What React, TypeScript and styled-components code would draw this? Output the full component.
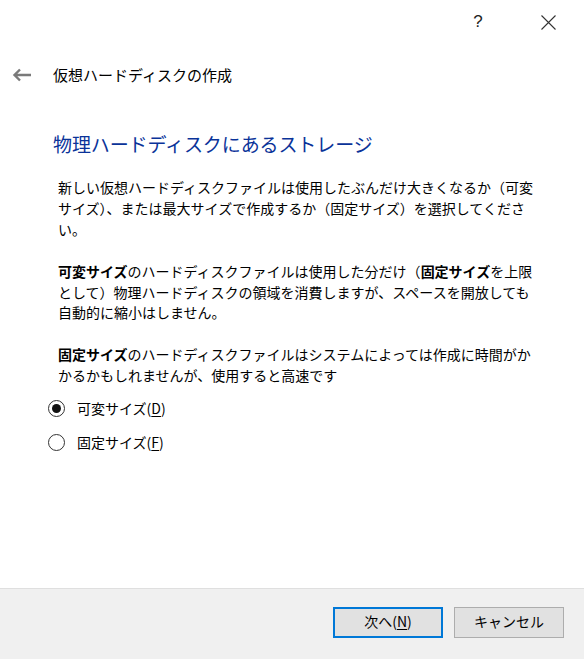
import React from "react";
import styled, { createGlobalStyle } from "styled-components";

const Global = createGlobalStyle`
  html, body { margin: 0; padding: 0; background: #ffffff; }
  body { font-family: "Noto Sans CJK JP", "Noto Sans", sans-serif; color: #000; }
`;

const Page = styled.div`
  width: 584px;
  height: 659px;
  display: flex;
  flex-direction: column;
  background: #ffffff;
  overflow: hidden;
`;

const TitleBar = styled.div`
  height: 44px;
  display: flex;
  justify-content: flex-end;
  align-items: center;
  padding-right: 13px;
  gap: 24px;
`;

const TitleButton = styled.div`
  width: 46px;
  height: 44px;
  display: flex;
  align-items: center;
  justify-content: center;
  color: #222;
  font-family: "Liberation Sans", sans-serif;
  font-size: 17px;
`;

const HeaderRow = styled.div`
  height: 30px;
  margin-top: 16px;
  display: flex;
  align-items: center;
  padding-left: 12px;
`;

const BackArrow = styled.div`
  width: 21px;
  height: 14px;
  display: flex;
  align-items: center;
  margin-right: 20px;
`;

const WizardTitle = styled.div`
  font-size: 15px;
  line-height: 30px;
  color: #000;
`;

const Content = styled.div`
  padding-left: 53px;
  display: flex;
  flex-direction: column;
`;

const Heading = styled.div`
  margin-top: 40px;
  font-size: 19px;
  line-height: 28px;
  color: #0a3399;
  letter-spacing: -0.1px;
`;

const Body = styled.div`
  margin-top: 19px;
  padding-left: 5px;
  font-size: 14px;
  line-height: 20.9px;
  color: #000;
  display: flex;
  flex-direction: column;
  gap: 20.9px;
`;

const Para = styled.div``;

const Line = styled.div`
  white-space: nowrap;
`;

const Strong = styled.b`
  font-weight: 700;
`;

const Options = styled.div`
  margin-top: 13px;
  display: flex;
  flex-direction: column;
  gap: 16px;
`;

const RadioRow = styled.label`
  display: flex;
  align-items: center;
  height: 18px;
  font-size: 14px;
  color: #000;
  margin-left: -5px;
`;

const RadioCircle = styled.span<{ $checked: boolean }>`
  box-sizing: border-box;
  width: 17px;
  height: 17px;
  border-radius: 50%;
  border: 1px solid #333;
  display: flex;
  align-items: center;
  justify-content: center;
  margin-right: 12px;
  &::after {
    content: "";
    width: 9px;
    height: 9px;
    border-radius: 50%;
    background: #111;
    display: ${(p) => (p.$checked ? "block" : "none")};
  }
`;

const Mnemonic = styled.span`
  text-decoration: underline;
  text-underline-offset: 2px;
`;

const Spacer = styled.div`
  flex: 1;
`;

const Footer = styled.div`
  height: 71px;
  background: #f0f0f0;
  border-top: 1px solid #dfdfdf;
  display: flex;
  justify-content: flex-end;
  align-items: flex-start;
  padding: 18px 20px 0 0;
  box-sizing: border-box;
  gap: 11px;
`;

const Button = styled.div<{ $primary?: boolean }>`
  box-sizing: border-box;
  width: 110px;
  height: 31px;
  background: #e1e1e1;
  border: ${(p) => (p.$primary ? "2px solid #0078d7" : "1px solid #adadad")};
  display: flex;
  align-items: center;
  justify-content: center;
  padding-bottom: 3px;
  font-size: 14px;
  color: #000;
`;

export default function App() {
  return (
    <>
      <Global />
      <Page>
        <TitleBar>
          <TitleButton>?</TitleButton>
          <TitleButton>
            <svg width="15" height="15" viewBox="0 0 15 15">
              <path d="M0.5 0.5 L14.5 14.5 M14.5 0.5 L0.5 14.5" stroke="#333" strokeWidth="1.1" fill="none" />
            </svg>
          </TitleButton>
        </TitleBar>
        <HeaderRow>
          <BackArrow>
            <svg width="20" height="14" viewBox="0 0 20 14">
              <path d="M19 7 H3 M8 1.5 L2.5 7 L8 12.5" stroke="#7a7a7a" strokeWidth="2.4" fill="none" />
            </svg>
          </BackArrow>
          <WizardTitle>仮想ハードディスクの作成</WizardTitle>
        </HeaderRow>
        <Content>
          <Heading>物理ハードディスクにあるストレージ</Heading>
          <Body>
            <Para>
              <Line>新しい仮想ハードディスクファイルは使用したぶんだけ大きくなるか（可変</Line>
              <Line>サイズ）、または最大サイズで作成するか（固定サイズ）を選択してくださ</Line>
              <Line>い。</Line>
            </Para>
            <Para>
              <Line>
                <Strong>可変サイズ</Strong>のハードディスクファイルは使用した分だけ（<Strong>固定サイズ</Strong>を上限
              </Line>
              <Line>として）物理ハードディスクの領域を消費しますが、スペースを開放しても</Line>
              <Line>自動的に縮小はしません。</Line>
            </Para>
            <Para>
              <Line>
                <Strong>固定サイズ</Strong>のハードディスクファイルはシステムによっては作成に時間がか
              </Line>
              <Line>かるかもしれませんが、使用すると高速です</Line>
            </Para>
          </Body>
          <Options>
            <RadioRow>
              <RadioCircle $checked={true} />
              可変サイズ(<Mnemonic>D</Mnemonic>)
            </RadioRow>
            <RadioRow>
              <RadioCircle $checked={false} />
              固定サイズ(<Mnemonic>F</Mnemonic>)
            </RadioRow>
          </Options>
        </Content>
        <Spacer />
        <Footer>
          <Button $primary>
            次へ(<Mnemonic>N</Mnemonic>)
          </Button>
          <Button>キャンセル</Button>
        </Footer>
      </Page>
    </>
  );
}
